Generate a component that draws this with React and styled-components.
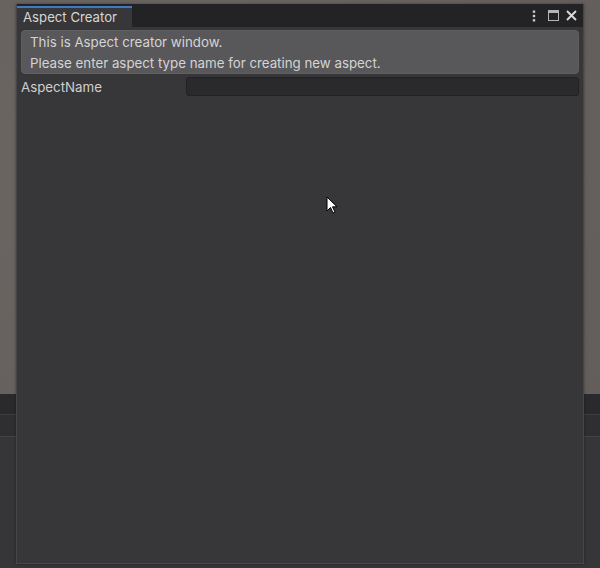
import React from "react";
import styled, { createGlobalStyle } from "styled-components";

const Global = createGlobalStyle`
  html, body { margin: 0; padding: 0; background: #2d2c2f; }
  body { font-family: Inter, "Noto Sans", "Liberation Sans", sans-serif; }
`;

const Stage = styled.div`
  position: relative;
  width: 600px;
  height: 568px;
  overflow: hidden;
  display: flex;
  flex-direction: column;
  background: #353437;
`;

const SceneArea = styled.div`
  height: 394px;
  background: radial-gradient(circle at 30% 40%, #6d6864 0%, #67625f 55%, #635e5b 100%);
`;

const Band = styled.div`
  height: ${(p) => p.$h}px;
  background: ${(p) => p.$bg};
  border-bottom: 1px solid ${(p) => p.$line};
`;

const Rest = styled.div`
  flex: 1;
  background: #363538;
`;

const Window = styled.div`
  position: absolute;
  left: 16px;
  top: 4px;
  width: 568px;
  height: 560px;
  box-sizing: border-box;
  border: 1px solid #474649;
  border-top: none;
  background: #373639;
  display: flex;
  flex-direction: column;
  box-shadow: 0 0 3px rgba(0, 0, 0, 0.35);
`;

const Header = styled.div`
  height: 23px;
  background: #232225;
  display: flex;
  align-items: stretch;
  justify-content: space-between;
`;

const Tab = styled.div`
  width: 115px;
  box-sizing: border-box;
  margin-top: 2px;
  border-top: 2px solid #3c7bc4;
  background: #373639;
  color: #d6d6d6;
  font-size: 13.2px;
  line-height: 19px;
  padding-left: 6px;
  white-space: nowrap;
`;

const Controls = styled.div`
  display: flex;
  align-items: center;
  padding-right: 6px;
  color: #c8c8c8;
`;

const IconSlot = styled.span`
  display: flex;
  align-items: center;
  margin-left: ${(p) => p.$gap}px;
`;

const Body = styled.div`
  padding: 3px 4px 0 4px;
  display: flex;
  flex-direction: column;
  gap: 3px;
`;

const HelpBox = styled.div`
  background: #58575a;
  border: 1px solid #5f5e61;
  border-radius: 4px;
  padding: 1px 8px 0 8px;
  color: #d4d4d4;
  font-size: 13.3px;
  line-height: 20.5px;
`;

const FieldRow = styled.div`
  display: flex;
  align-items: center;
  height: 19px;
`;

const Label = styled.div`
  width: 165px;
  color: #cfcfcf;
  font-size: 13.3px;
`;

const Input = styled.div`
  flex: 1;
  height: 19px;
  box-sizing: border-box;
  background: #2a292c;
  border: 1px solid #222124;
  border-radius: 3px;
`;

const Cursor = styled.svg`
  position: absolute;
  left: 326px;
  top: 196px;
`;

function Kebab() {
  return (
    <svg width="4" height="12" viewBox="0 0 4 12">
      <rect x="0.8" y="0.5" width="2.4" height="2.4" fill="#c8c8c8" />
      <rect x="0.8" y="4.8" width="2.4" height="2.4" fill="#c8c8c8" />
      <rect x="0.8" y="9.1" width="2.4" height="2.4" fill="#c8c8c8" />
    </svg>
  );
}

function Maximize() {
  return (
    <svg width="11" height="11" viewBox="0 0 11 11">
      <rect x="0.5" y="0.5" width="10" height="10" fill="none" stroke="#b5b5b5" strokeWidth="1" />
      <rect x="0.5" y="0.5" width="10" height="2.5" fill="#b5b5b5" />
    </svg>
  );
}

function Close() {
  return (
    <svg width="11" height="11" viewBox="0 0 11 11">
      <path d="M1 1 L10 10 M10 1 L1 10" stroke="#dadada" strokeWidth="1.9" />
    </svg>
  );
}

export default function App() {
  return (
    <>
      <Global />
      <Stage>
        <SceneArea />
        <Band $h={20} $bg="#2a292c" $line="#3c3b3e" />
        <Band $h={21} $bg="#2f2e31" $line="#434245" />
        <Rest />
        <Window>
          <Header>
            <Tab>Aspect Creator</Tab>
            <Controls>
              <IconSlot $gap={0}><Kebab /></IconSlot>
              <IconSlot $gap={12}><Maximize /></IconSlot>
              <IconSlot $gap={7}><Close /></IconSlot>
            </Controls>
          </Header>
          <Body>
            <HelpBox>
              <div>This is Aspect creator window.</div>
              <div>Please enter aspect type name for creating new aspect.</div>
            </HelpBox>
            <FieldRow>
              <Label>AspectName</Label>
              <Input />
            </FieldRow>
          </Body>
        </Window>
        <Cursor width="12" height="19" viewBox="0 0 12 19">
          <path d="M1 1 L1 15 L4.5 11.5 L7 17 L9 16 L6.5 10.8 L11 10.8 Z" fill="#ffffff" stroke="#000" strokeWidth="1" strokeLinejoin="round" />
        </Cursor>
      </Stage>
    </>
  );
}
